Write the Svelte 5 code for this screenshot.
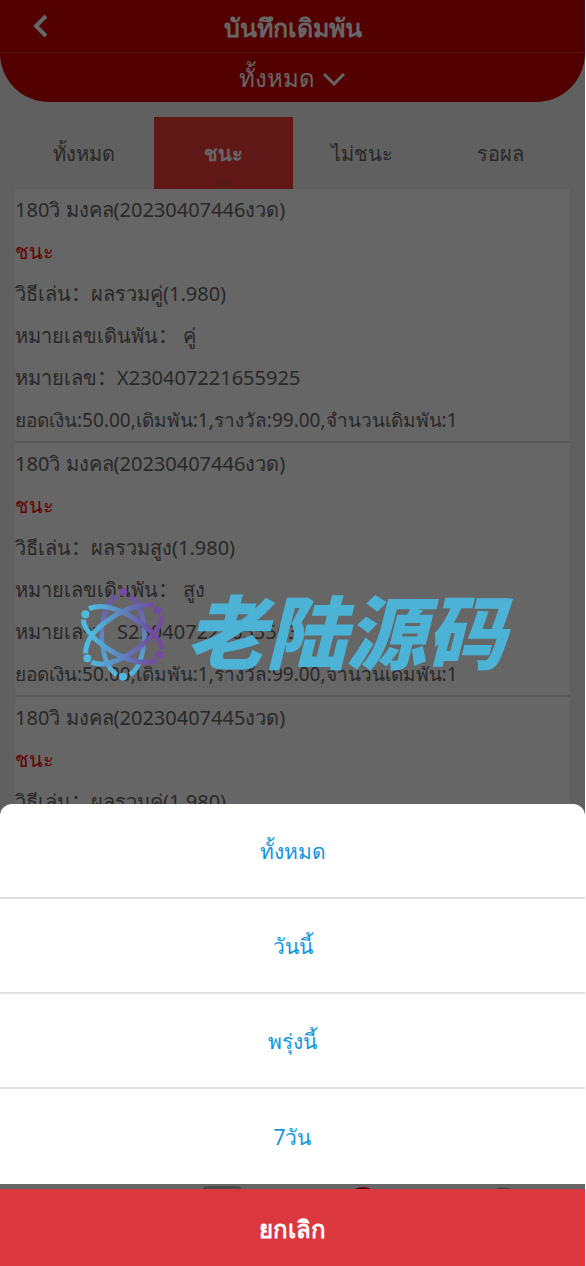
<script>
  const tabs = ["ทั้งหมด", "ชนะ", "ไม่ชนะ", "รอผล"];
  const ranges = ["ทั้งหมด", "วันนี้", "พรุ่งนี้", "7วัน"];

  const bets = [
    {
      issue: "20230407446",
      play: "ผลรวมคู่(1.980)",
      pick: "คู่",
      number: "X230407221655925",
    },
    {
      issue: "20230407446",
      play: "ผลรวมสูง(1.980)",
      pick: "สูง",
      number: "S230407221655563",
    },
    {
      issue: "20230407445",
      play: "ผลรวมคู่(1.980)",
      pick: "คู่",
      number: "X230407221512347",
    },
  ];

  let activeTab = $state(1);
  let range = $state(0);
  let sheetOpen = $state(true);

  function selectRange(i) {
    range = i;
    sheetOpen = false;
  }
</script>

<div class="page">
  <header class="nav-bar">
    <button class="back" aria-label="กลับ">
      <svg width="16" height="24" viewBox="0 0 16 24">
        <path d="M13 2 L3 12 L13 22" />
      </svg>
    </button>
    <h1>บันทึกเดิมพัน</h1>
  </header>

  <div class="filter-bar">
    <button class="filter" onclick={() => (sheetOpen = true)}>
      {ranges[range]}
      <svg width="24" height="14" viewBox="0 0 24 14">
        <path d="M2 2 L12 12 L22 2" />
      </svg>
    </button>
  </div>

  <main class="content">
    <nav class="tabs">
      {#each tabs as tab, i}
        <button class="tab" class:active={activeTab === i} onclick={() => (activeTab = i)}>{tab}</button>
      {/each}
    </nav>

    <ul class="bet-list">
      {#each bets as bet}
        <li class="bet">
          <p>180วิ มงคล({bet.issue}งวด)</p>
          <p class="win">ชนะ</p>
          <p>วิธีเล่น：{bet.play}</p>
          <p>หมายเลขเดินพัน： {bet.pick}</p>
          <p>หมายเลข：{bet.number}</p>
          <p class="total">ยอดเงิน:50.00,เดิมพัน:1,รางวัล:99.00,จำนวนเดิมพัน:1</p>
        </li>
      {/each}
    </ul>
  </main>

  <footer class="tab-bar">
    <span></span>
    <span><i class="icon-card"></i></span>
    <span><i class="icon-round red"></i></span>
    <span><i class="icon-round"></i></span>
  </footer>

  {#if sheetOpen}
    <div class="overlay"></div>
    <div class="action-sheet">
      <div class="options">
        {#each ranges as item, i}
          <button class="option" onclick={() => selectRange(i)}>{item}</button>
        {/each}
      </div>
      <button class="cancel" onclick={() => (sheetOpen = false)}>ยกเลิก</button>
    </div>
  {/if}

  <div class="watermark">
    <svg width="87" height="97" viewBox="45 50 261 291">
      <defs>
        <linearGradient id="orbit-v" gradientUnits="userSpaceOnUse" x1="177" y1="70" x2="177" y2="320">
          <stop offset="0" stop-color="#704b9e" />
          <stop offset="1" stop-color="#4fb9df" />
        </linearGradient>
        <linearGradient id="orbit-h" gradientUnits="userSpaceOnUse" x1="60" y1="200" x2="290" y2="200">
          <stop offset="0.1" stop-color="#4fb9df" />
          <stop offset="0.9" stop-color="#704b9e" />
        </linearGradient>
      </defs>
      <g stroke="url(#orbit-v)" stroke-width="14">
        <path d="M158 80 C128 98 113 145 113 195 C113 245 128 298 158 316" />
        <path d="M198 80 C227 98 241 145 241 195 C241 245 227 298 198 316" />
      </g>
      <g stroke="url(#orbit-h)" stroke-width="15">
        <path d="M75 118 C110 103 160 115 210 147 C262 181 291 212 294 239" />
        <path d="M58 151 C60 182 95 215 140 244 C190 276 240 286 278 274" />
        <path d="M270 108 C235 100 185 118 140 147 C88 182 64 217 65 252" />
        <path d="M292 139 C293 170 262 209 208 247 C165 276 118 292 83 279" />
      </g>
      <g fill="#704b9e">
        <circle cx="178" cy="68" r="12" />
        <circle cx="281" cy="123" r="12" />
        <circle cx="287" cy="256" r="12" />
      </g>
      <g fill="#4fb9df">
        <circle cx="64" cy="135" r="12" />
        <circle cx="70" cy="267" r="12" />
        <circle cx="177" cy="322" r="12" />
      </g>
    </svg>
    <span>老陆源码</span>
  </div>
</div>

<style>
  :global(body) {
    margin: 0;
    background: #fff;
  }

  .page {
    position: relative;
    display: flex;
    flex-direction: column;
    height: 100vh;
    margin-right: 1px;
    overflow: hidden;
    background: #f0f0f0;
    color: #666;
    font-family: "Noto Sans", "Open Sans", "Noto Sans CJK SC", sans-serif;
    font-size: 20px;
  }

  button {
    padding: 0;
    border: 0;
    background: none;
    color: inherit;
    font: inherit;
    cursor: pointer;
  }

  svg path {
    fill: none;
  }

  .nav-bar {
    display: flex;
    align-items: center;
    justify-content: center;
    position: relative;
    height: 52px;
    flex-shrink: 0;
    border-bottom: 1px solid #d64040;
    background: #cd0000;
    color: #fff;
  }

  .nav-bar h1 {
    margin: 0;
    padding-top: 2px;
    font-size: 25px;
    line-height: 50px;
  }

  .back {
    display: flex;
    position: absolute;
    left: 33px;
  }

  .back path {
    stroke: #fff;
    stroke-width: 4;
  }

  .filter-bar {
    display: flex;
    justify-content: center;
    height: 49px;
    flex-shrink: 0;
    border-radius: 0 0 50px 50px;
    background: #cd0000;
    color: #fff;
  }

  .filter {
    display: flex;
    align-items: center;
    gap: 7px;
    padding-top: 2px;
    font-size: 24px;
  }

  .filter path {
    stroke: #fff;
    stroke-width: 3;
  }

  .content {
    flex: 1;
    min-height: 0;
    padding: 15px 15px 0;
    overflow: hidden;
  }

  .tabs {
    display: flex;
  }

  .tab {
    position: relative;
    flex: 1;
    height: 72px;
    padding-top: 2px;
  }

  .tab.active {
    background: #f13e3a;
    color: #fff;
    font-weight: bold;
  }

  .tab.active::after {
    content: "";
    position: absolute;
    left: 50%;
    bottom: 3px;
    margin-left: -8px;
    border: 8px solid transparent;
    border-top: 0;
    border-bottom-color: #d83a3e;
  }

  .bet-list {
    margin: 0;
    padding: 0;
    list-style: none;
    background: #fff;
  }

  .bet {
    border-bottom: 2px solid #e0e0e0;
  }

  .bet p {
    margin: 0;
    line-height: 42px;
    white-space: nowrap;
  }

  .bet .win {
    color: #f00;
  }

  .bet .total {
    font-size: 19px;
  }

  .tab-bar {
    display: flex;
    height: 82px;
    flex-shrink: 0;
    padding: 0 12px;
    border-top: 1px solid #ddd;
    background: #fff;
  }

  .tab-bar span {
    display: flex;
    flex: 1;
    justify-content: center;
    padding-top: 2px;
  }

  .icon-card {
    width: 40px;
    height: 32px;
    border-radius: 5px;
    background: #bbb;
  }

  .icon-round {
    width: 34px;
    height: 34px;
    margin-top: 1px;
    border-radius: 50%;
    background: #bbb;
  }

  .icon-round.red {
    background: #d02020;
  }

  .overlay {
    position: absolute;
    inset: 0;
    background: rgba(0, 0, 0, 0.6);
  }

  .action-sheet {
    display: flex;
    flex-direction: column;
    gap: 5px;
    position: absolute;
    right: 0;
    bottom: 0;
    left: 0;
  }

  .options {
    display: flex;
    flex-direction: column;
    overflow: hidden;
    border-radius: 12px 12px 0 0;
    background: #fff;
    color: #1296db;
  }

  .option {
    height: 95px;
    padding-top: 2px;
    border-bottom: 2px solid #e0e0e0;
    font-size: 21px;
  }

  .option:last-child {
    border-bottom: 0;
  }

  .cancel {
    height: 77px;
    padding-top: 4px;
    background: #da383e;
    color: #fff;
    font-size: 24px;
    font-weight: bold;
  }

  .watermark {
    display: flex;
    align-items: center;
    justify-content: center;
    gap: 20px;
    position: absolute;
    top: 50%;
    right: 0;
    left: 0;
    height: 97px;
    margin-top: -47px;
    color: #4db3d6;
    pointer-events: none;
  }

  .watermark span {
    padding-bottom: 14px;
    font-family: "Noto Sans CJK SC", sans-serif;
    font-size: 80px;
    font-style: italic;
    font-weight: 900;
    line-height: 84px;
    white-space: nowrap;
  }
</style>
